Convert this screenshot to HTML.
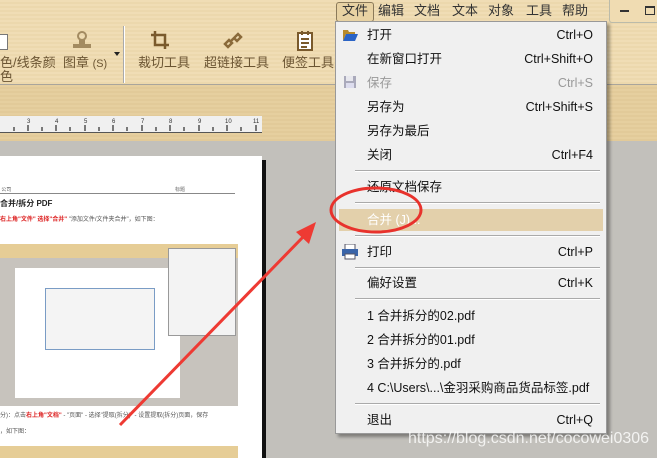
<!DOCTYPE html>
<html><head><meta charset="utf-8"><style>
body{margin:0;width:657px;height:458px;overflow:hidden;position:relative;font-family:"Liberation Sans","Noto Sans CJK SC",sans-serif;background:#c2c0bb}
.tb{position:absolute;left:0;top:0;width:657px;height:84px;background:repeating-linear-gradient(180deg,#f0ddb5 0,#f0ddb5 2px,#ecd8ad 2px,#ecd8ad 4px)}
.tb2{position:absolute;left:0;top:84px;width:657px;height:56px;background:repeating-linear-gradient(180deg,#e6cf9f 0,#e6cf9f 2px,#e2ca99 2px,#e2ca99 4px);border-top:1px solid #a9a59c}
.lbl{position:absolute;font-size:13px;color:#6b5533;top:55px;line-height:16px}
.ruler{position:absolute;left:0;top:116px;width:262px;height:16px;background:#f0f0f0;border-bottom:1px solid #555;font-size:6px;color:#333}
.page{position:absolute;left:0;top:156px;width:262px;height:302px;background:#fff}
.shadow{position:absolute;left:262px;top:160px;width:4px;height:298px;background:#111}
.mb{position:absolute;top:3px;font-size:13px;color:#333;line-height:16px}
.menu{position:absolute;left:335px;top:21px;width:270px;height:411px;background:#f0f0f0;border:1px solid #999;box-shadow:3px 3px 3px rgba(0,0,0,.35)}
.it{position:absolute;left:31px;font-size:12.5px;color:#111;width:226px;height:16px;line-height:16px;display:flex;justify-content:space-between;white-space:nowrap}
.sep{position:absolute;left:19px;width:245px;height:1px;background:#aaa;border-bottom:1px solid #fff}
</style></head><body>
<div class="tb"></div><div class="tb2"></div>
<div style="position:absolute;left:0;top:34px;width:7px;height:14px;background:#fff;border:1px solid #777;border-left:none"></div>
<div class="lbl" style="left:0">色/线条颜</div><div class="lbl" style="left:0;top:69px">色</div>
<svg style="position:absolute;left:70px;top:30px" width="24" height="22"><circle cx="12" cy="6" r="4" fill="none" stroke="#a38b61" stroke-width="2"/><rect x="9" y="10" width="6" height="5" fill="#a38b61"/><rect x="3" y="14" width="18" height="4" fill="#a38b61"/></svg>
<div class="lbl" style="left:63px">图章 <small>(S)</small></div>
<div style="position:absolute;left:114px;top:52px;border:3px solid transparent;border-top:4px solid #222"></div>
<div style="position:absolute;left:123px;top:26px;width:1px;height:57px;background:#fff;border-left:1px solid #aaa"></div>
<svg style="position:absolute;left:150px;top:30px" width="20" height="20" stroke="#7a5a2c" stroke-width="2.5" fill="none"><path d="M5 1V15H19M1 5H15V19"/></svg>
<div class="lbl" style="left:138px">裁切工具</div>
<svg style="position:absolute;left:222px;top:30px" width="22" height="20" stroke="#8a6a3a" stroke-width="2.5" fill="none"><path d="M3 14l4-4 3 3-4 4zM12 8l4-4 3 3-4 4zM9 11l4-4"/></svg>
<div class="lbl" style="left:204px">超链接工具</div>
<svg style="position:absolute;left:296px;top:30px" width="18" height="22" stroke="#7a5a2c" stroke-width="2" fill="#fff"><rect x="2" y="3" width="14" height="17"/><path d="M5 9h8M5 13h8M5 17h6M6 1v4M12 1v4"/></svg>
<div class="lbl" style="left:282px">便签工具</div>
<div class="ruler"><svg width="262" height="16" style="position:absolute;left:0;top:0" stroke="#000">
<g font-size="6" fill="#333" stroke="none"><text x="27" y="7">3</text><text x="55" y="7">4</text><text x="84" y="7">5</text><text x="112" y="7">6</text><text x="141" y="7">7</text><text x="169" y="7">8</text><text x="198" y="7">9</text><text x="225" y="7">10</text><text x="253" y="7">11</text></g>
<path d="M14 11v4M28 9v6M42 11v4M56 9v6M70 11v4M85 9v6M99 11v4M113 9v6M127 11v4M142 9v6M156 11v4M170 9v6M184 11v4M199 9v6M213 11v4M227 9v6M241 11v4M256 9v6"/></svg></div>
<div class="page">
<div style="position:absolute;left:0;top:30px;width:235px;border-bottom:1px solid #888;font-size:5px;color:#666">&nbsp;公司<span style="position:absolute;left:175px">标题</span></div>
<div style="position:absolute;left:0;top:42px;font-size:8px;font-weight:bold;color:#222">合并/拆分 PDF</div>
<div style="position:absolute;left:0;top:58px;font-size:6px;color:#555"><b style="color:#d22">右上角"文件" 选择"合并"</b> "添加文件/文件夹合并"，如下图：</div>
<div style="position:absolute;left:0;top:88px;width:238px;height:148px;background:#c7c3bd;border-top:14px solid #e6cd96">
<div style="position:absolute;left:15px;top:10px;width:165px;height:130px;background:#fff"></div>
<div style="position:absolute;left:45px;top:30px;width:108px;height:60px;background:#f4f4f4;border:1px solid #7a9cc5"></div>
<div style="position:absolute;left:168px;top:-10px;width:66px;height:86px;background:#f3f3f3;border:1px solid #999"></div></div>
<div style="position:absolute;left:0;top:254px;font-size:6px;color:#555">分)：点击<b style="color:#d22">右上角"文档"</b> - "页面" - 选择"提取(拆分)" - 设置提取(拆分)页面，保存</div>
<div style="position:absolute;left:0;top:270px;font-size:6px;color:#555">，如下图：</div>
<div style="position:absolute;left:0;top:290px;width:238px;height:12px;background:#e6cd96"></div>
</div>
<div class="shadow"></div>
<div style="position:absolute;left:336px;top:2px;width:36px;height:18px;border:1px solid #8b7a5a;border-radius:3px;background:#e8d2a3"></div>
<div class="mb" style="left:342px">文件</div><div class="mb" style="left:378px">编辑</div><div class="mb" style="left:414px">文档</div><div class="mb" style="left:452px">文本</div><div class="mb" style="left:488px">对象</div><div class="mb" style="left:526px">工具</div><div class="mb" style="left:562px">帮助</div>
<div style="position:absolute;left:609px;top:0;width:48px;height:22px;border-left:1px solid #bba;border-bottom:1px solid #bba;border-radius:0 0 0 3px;background:#f0dcb2"></div>
<div style="position:absolute;left:620px;top:10px;width:9px;height:2px;background:#333"></div>
<div style="position:absolute;left:645px;top:6px;width:8px;height:6px;border:1px solid #333;border-top-width:2px"></div>
<div class="menu">
<svg style="position:absolute;left:6px;top:6px" width="16" height="14"><path d="M1 2h5l1 2h6v2H4L1 13z" fill="#b78a2a"/><path d="M4 6h12l-3 7H1z" fill="#2b64c6"/></svg>
<div class="it" style="top:5px"><b style="font-weight:normal">打开</b><span>Ctrl+O</span></div>
<div class="it" style="top:29px"><b style="font-weight:normal">在新窗口打开</b><span>Ctrl+Shift+O</span></div>
<svg style="position:absolute;left:7px;top:53px" width="14" height="14"><rect x="1" y="1" width="12" height="12" fill="#aab" /><rect x="3" y="1" width="7" height="5" fill="#e8e8ee"/><rect x="3" y="8" width="8" height="5" fill="#dde"/></svg>
<div class="it" style="top:53px;color:#999"><b style="font-weight:normal">保存</b><span>Ctrl+S</span></div>
<div class="it" style="top:77px"><b style="font-weight:normal">另存为</b><span>Ctrl+Shift+S</span></div>
<div class="it" style="top:101px">另存为最后</div>
<div class="it" style="top:125px"><b style="font-weight:normal">关闭</b><span>Ctrl+F4</span></div>
<div class="sep" style="top:148px"></div>
<div class="it" style="top:157px">还原文档保存</div>
<div class="sep" style="top:180px"></div>
<div style="position:absolute;left:3px;top:187px;width:264px;height:22px;background:#e3d0ab"></div>
<div class="it" style="top:190px;color:#fff">合并 (J)...</div>
<div class="sep" style="top:213px"></div>
<svg style="position:absolute;left:5px;top:222px" width="18" height="16"><rect x="4" y="0" width="10" height="6" fill="#fff" stroke="#556"/><rect x="1" y="5" width="16" height="7" fill="#3a64a8"/><rect x="4" y="10" width="10" height="5" fill="#fff" stroke="#556"/></svg>
<div class="it" style="top:222px"><b style="font-weight:normal">打印</b><span>Ctrl+P</span></div>
<div class="sep" style="top:245px"></div>
<div class="it" style="top:253px"><b style="font-weight:normal">偏好设置</b><span>Ctrl+K</span></div>
<div class="sep" style="top:276px"></div>
<div class="it" style="top:286px">1 合并拆分的02.pdf</div>
<div class="it" style="top:310px">2 合并拆分的01.pdf</div>
<div class="it" style="top:334px">3 合并拆分的.pdf</div>
<div class="it" style="top:358px">4 C:\Users\...\金羽采购商品货品标签.pdf</div>
<div class="sep" style="top:381px"></div>
<div class="it" style="top:390px"><b style="font-weight:normal">退出</b><span>Ctrl+Q</span></div>
</div>
<div style="position:absolute;left:408px;top:430px;font-size:16px;color:rgba(255,255,255,.8)">https://blog.csdn.net/cocowei0306</div>
<svg style="position:absolute;left:0;top:0" width="657" height="458"><ellipse cx="376" cy="210" rx="45" ry="22" fill="none" stroke="#e8322c" stroke-width="3"/>
<path d="M120 425L304 236" stroke="#ee3a33" stroke-width="3" fill="none"/><path d="M316 222L296 232L309 244z" fill="#ee3a33"/></svg>
</body></html>
